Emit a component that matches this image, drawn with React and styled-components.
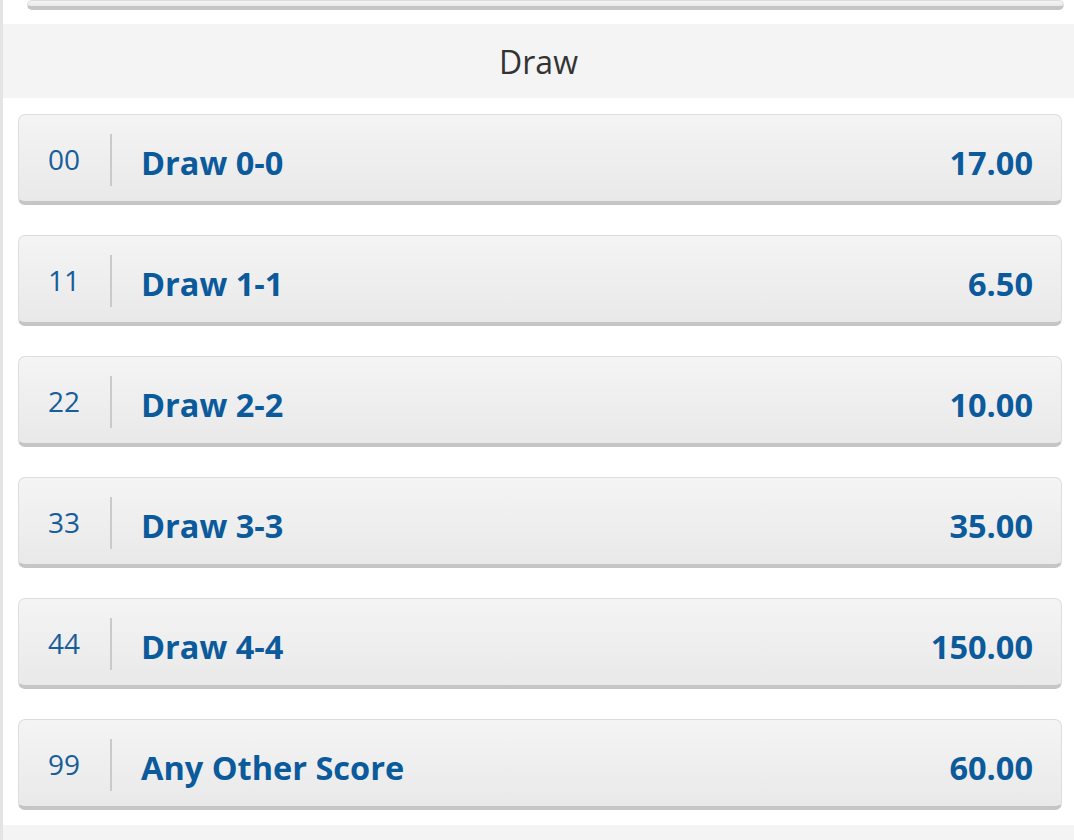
import React from "react";
import styled, { createGlobalStyle } from "styled-components";

const Global = createGlobalStyle`
  html, body { margin: 0; padding: 0; background: #ffffff; }
  body { font-family: "Open Sans", "Noto Sans", sans-serif; }
`;

const Page = styled.div`
  border-left: 3px solid #e4e4e4;
  min-height: 840px;
  box-sizing: border-box;
  overflow: hidden;
`;

const PrevStub = styled.div`
  height: 10px;
  overflow: hidden;
  display: flex;
  flex-direction: column;
  justify-content: flex-end;
  padding: 0 10px 0 24px;
`;

const Header = styled.div`
  margin-top: 14px;
  height: 74px;
  background: #f4f4f4;
  display: flex;
  align-items: center;
  justify-content: center;
  color: #333333;
  font-size: 32px;
  font-weight: 400;
`;

const List = styled.div`
  display: flex;
  flex-direction: column;
  gap: 30px;
  padding: 16px 12px 15px 15px;
`;

const Card = styled.div`
  box-sizing: border-box;
  height: ${(p) => p.$h || 91}px;
  border: 1px solid #dddddd;
  border-bottom: 4px solid #c5c5c5;
  border-radius: 7px;
  background: linear-gradient(#f4f4f4, #e9e9e9);
  display: flex;
  align-items: center;
  padding: 0 28px 0 29px;
  color: #0b5a9b;
`;

const Num = styled.div`
  width: 62px;
  font-size: 28px;
  font-weight: 400;
  color: #185d99;
  margin-top: 2px;
`;

const Sep = styled.div`
  width: 2px;
  height: 52px;
  background: #cacaca;
  margin-top: 4px;
`;

const Label = styled.div`
  flex: 1;
  margin-left: 29px;
  font-size: 32.5px;
  font-weight: 700;
  padding-top: 9px;
`;

const Odds = styled.div`
  font-size: 32.5px;
  font-weight: 700;
  padding-top: 9px;
`;

const Footer = styled.div`
  height: 40px;
  background: #f4f4f4;
`;

const rows = [
  ["00", "Draw 0-0", "17.00"],
  ["11", "Draw 1-1", "6.50"],
  ["22", "Draw 2-2", "10.00"],
  ["33", "Draw 3-3", "35.00"],
  ["44", "Draw 4-4", "150.00"],
  ["99", "Any Other Score", "60.00"],
];

export default function App() {
  return (
    <Page>
      <Global />
      <PrevStub>
        <Card $h={80} />
      </PrevStub>
      <Header>Draw</Header>
      <List>
        {rows.map(([n, l, o]) => (
          <Card key={n}>
            <Num>{n}</Num>
            <Sep />
            <Label>{l}</Label>
            <Odds>{o}</Odds>
          </Card>
        ))}
      </List>
      <Footer />
    </Page>
  );
}
